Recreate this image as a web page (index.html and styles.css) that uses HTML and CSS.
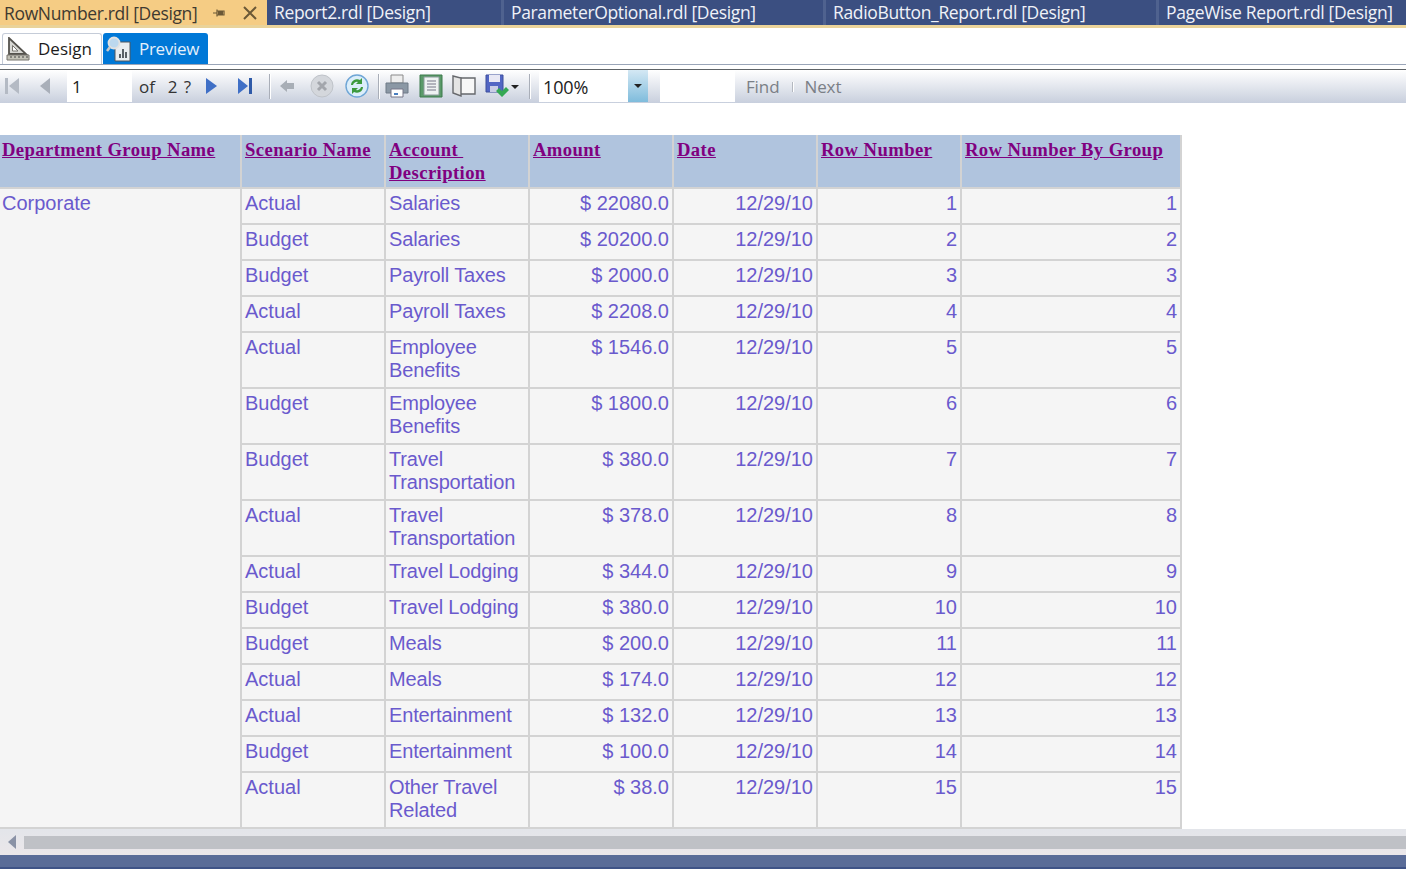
FILE: index.html
```html
<!DOCTYPE html>
<html lang="en">
<head>
    <meta charset="UTF-8">
    <title>RowNumber.rdl [Design]</title>
    <link rel="stylesheet" href="styles.css">
</head>
<body>
    <div class="doc-tabs">
        <div class="doc-tab active">
            <span class="doc-name">RowNumber.rdl [Design]</span>
            <svg class="pin" width="14" height="10" viewBox="0 0 14 10"><path d="M0 5H4M4 1.5V8.5M4 3H11V7H4" fill="none" stroke="#6b5836" stroke-width="1.2"/><path d="M5 3H10V7H5Z" fill="#6b5836"/></svg>
            <svg class="close" width="16" height="16" viewBox="0 0 16 16"><path d="M2 2L14 14M14 2L2 14" stroke="#6b5836" stroke-width="2"/></svg>
        </div>
        <div class="doc-tab t2">Report2.rdl [Design]</div>
        <div class="doc-tab t3">ParameterOptional.rdl [Design]</div>
        <div class="doc-tab t4">RadioButton_Report.rdl [Design]</div>
        <div class="doc-tab t5">PageWise Report.rdl [Design]</div>
    </div>
    <div class="doc-strip"></div>

    <div class="view-tabs">
        <div class="view-tab design">
            <svg width="24" height="24" viewBox="0 0 24 24"><path d="M3 1V17H20Z" fill="#d8d8d4" stroke="#55534e" stroke-width="1.8"/><path d="M6.5 8.5V14H12Z" fill="#fff" stroke="#77756f"/><path d="M1 18H23V23H1Z" fill="#c4c3b8" stroke="#77756f"/><path d="M5 19V21M9 19V21M13 19V21M17 19V21M21 19V21" stroke="#444"/></svg>
            <span class="view-label">Design</span>
        </div>
        <div class="view-tab preview">
            <svg width="25" height="26" viewBox="0 0 25 26"><path d="M9 6H24V25H9Z" fill="#e9edf0" stroke="#50565c"/><path d="M13 22V18H15V22ZM16 22V13H18V22ZM19 22V16H21V22Z" fill="#5a6066"/><circle cx="8" cy="7" r="5.5" fill="#bcd8ee" stroke="#e2e2e2" stroke-width="1.8"/><path d="M4 11L1 15" stroke="#c9c9c9" stroke-width="2.6"/></svg>
            <span class="view-label">Preview</span>
        </div>
    </div>

    <div class="toolbar">
        <svg class="tool first" width="16" height="18" viewBox="0 0 16 18"><path d="M1 1H4V17H1ZM15 1V17L5 9Z" fill="#b4bac4"/></svg>
        <svg class="tool prev" width="14" height="18" viewBox="0 0 14 18"><path d="M12 1V17L2 9Z" fill="#a9afb9"/></svg>
        <div class="field page-field">1</div>
        <span class="tool-text of">of</span>
        <span class="tool-text total">2 ?</span>
        <svg class="tool next" width="13" height="18" viewBox="0 0 13 18"><path d="M1 1V17L12 9Z" fill="#3f6fc6"/></svg>
        <svg class="tool last" width="16" height="18" viewBox="0 0 16 18"><path d="M1 1V17L11 9Z" fill="#3f6fc6"/><path d="M12 1H15V17H12Z" fill="#2f5aa8"/></svg>
        <div class="sep s1"></div>
        <svg class="tool back" width="16" height="14" viewBox="0 0 16 14"><path d="M1 7L8 1V4H15V10H8V13Z" fill="#a8aeb6"/></svg>
        <svg class="tool stop" width="24" height="24" viewBox="0 0 24 24"><circle cx="12" cy="12" r="11" fill="#d4d7dc" stroke="#bfc3c9"/><path d="M8 8L16 16M16 8L8 16" stroke="#a3a6ac" stroke-width="3"/></svg>
        <svg class="tool refresh" width="24" height="24" viewBox="0 0 24 24"><circle cx="12" cy="12" r="11" fill="#dceefa" stroke="#6fa6d6" stroke-width="1.4"/><path d="M6 11A6 6 0 0 1 15 6L17 4V10H11L13 8A4 4 0 0 0 8 11Z" fill="#3d9a3d"/><path d="M18 13A6 6 0 0 1 9 18L7 20V14H13L11 16A4 4 0 0 0 16 13Z" fill="#3d9a3d"/></svg>
        <div class="sep s2"></div>
        <svg class="tool print" width="24" height="24" viewBox="0 0 24 24"><path d="M6 1H18V9H6Z" fill="#eee" stroke="#8a8a8a"/><path d="M1 9H23V19H1Z" fill="#8b98a5" stroke="#6f7b87"/><path d="M6 15H18V23H6Z" fill="#fff" stroke="#778"/><path d="M9 19H13V21H9Z" fill="#4a7fc0"/></svg>
        <svg class="tool pages" width="24" height="24" viewBox="0 0 24 24"><path d="M1 1H23V23H1Z" fill="#5a9a69" stroke="#3c7a4c"/><path d="M5 3H20V21H5Z" fill="#eef2f2" stroke="#8a9a9a"/><path d="M8 7H17M8 10H17M8 13H17M8 16H17" stroke="#778"/></svg>
        <svg class="tool layout" width="24" height="22" viewBox="0 0 24 22"><path d="M8 3H23V19H8Z" fill="#f7f7f7" stroke="#66686c" stroke-width="1.4"/><path d="M1 1L9 3V21L1 18Z" fill="#e4e4e4" stroke="#66686c" stroke-width="1.4"/></svg>
        <svg class="tool save" width="24" height="24" viewBox="0 0 24 24"><path d="M1 1H18V18H1Z" fill="#5266c4" stroke="#3c4f9c"/><path d="M4 1H15V8H4Z" fill="#e8e8f4"/><path d="M5 12H13V18H5Z" fill="#c9cde6"/><path d="M11 17L14 14L17 17L21 13L24 16L17 23Z" fill="#34a853"/></svg>
        <div class="caret save-caret"></div>
        <div class="sep s3"></div>
        <div class="field zoom-field">100%</div>
        <div class="zoom-drop"><div class="caret"></div></div>
        <div class="field find-field"></div>
        <span class="tool-text find">Find</span>
        <div class="sep s4"></div>
        <span class="tool-text next-link">Next</span>
    </div>

    <div class="report">
        <table class="report-table">
            <colgroup>
                <col class="c1"><col class="c2"><col class="c3"><col class="c4"><col class="c5"><col class="c6"><col class="c7">
            </colgroup>
            <thead>
                <tr>
                    <th class="dept"><a>Department Group Name</a></th>
                    <th><a>Scenario Name</a></th>
                    <th><a>Account&nbsp;<br>Description</a></th>
                    <th><a>Amount</a></th>
                    <th><a>Date</a></th>
                    <th><a>Row Number</a></th>
                    <th><a>Row Number By Group</a></th>
                </tr>
            </thead>
            <tbody>
                <tr class="first-row"><td class="dept" rowspan="15">Corporate</td><td>Actual</td><td>Salaries</td><td class="num">$ 22080.0</td><td class="num">12/29/10</td><td class="num">1</td><td class="num">1</td></tr>
                <tr><td>Budget</td><td>Salaries</td><td class="num">$ 20200.0</td><td class="num">12/29/10</td><td class="num">2</td><td class="num">2</td></tr>
                <tr><td>Budget</td><td>Payroll Taxes</td><td class="num">$ 2000.0</td><td class="num">12/29/10</td><td class="num">3</td><td class="num">3</td></tr>
                <tr><td>Actual</td><td>Payroll Taxes</td><td class="num">$ 2208.0</td><td class="num">12/29/10</td><td class="num">4</td><td class="num">4</td></tr>
                <tr class="tall"><td>Actual</td><td>Employee Benefits</td><td class="num">$ 1546.0</td><td class="num">12/29/10</td><td class="num">5</td><td class="num">5</td></tr>
                <tr class="tall"><td>Budget</td><td>Employee Benefits</td><td class="num">$ 1800.0</td><td class="num">12/29/10</td><td class="num">6</td><td class="num">6</td></tr>
                <tr class="tall"><td>Budget</td><td>Travel Transportation</td><td class="num">$ 380.0</td><td class="num">12/29/10</td><td class="num">7</td><td class="num">7</td></tr>
                <tr class="tall"><td>Actual</td><td>Travel Transportation</td><td class="num">$ 378.0</td><td class="num">12/29/10</td><td class="num">8</td><td class="num">8</td></tr>
                <tr><td>Actual</td><td>Travel Lodging</td><td class="num">$ 344.0</td><td class="num">12/29/10</td><td class="num">9</td><td class="num">9</td></tr>
                <tr><td>Budget</td><td>Travel Lodging</td><td class="num">$ 380.0</td><td class="num">12/29/10</td><td class="num">10</td><td class="num">10</td></tr>
                <tr><td>Budget</td><td>Meals</td><td class="num">$ 200.0</td><td class="num">12/29/10</td><td class="num">11</td><td class="num">11</td></tr>
                <tr><td>Actual</td><td>Meals</td><td class="num">$ 174.0</td><td class="num">12/29/10</td><td class="num">12</td><td class="num">12</td></tr>
                <tr><td>Actual</td><td>Entertainment</td><td class="num">$ 132.0</td><td class="num">12/29/10</td><td class="num">13</td><td class="num">13</td></tr>
                <tr><td>Budget</td><td>Entertainment</td><td class="num">$ 100.0</td><td class="num">12/29/10</td><td class="num">14</td><td class="num">14</td></tr>
                <tr class="tall"><td>Actual</td><td>Other Travel Related</td><td class="num">$ 38.0</td><td class="num">12/29/10</td><td class="num">15</td><td class="num">15</td></tr>
            </tbody>
        </table>
    </div>

    <div class="scrollbar">
        <svg class="scroll-arrow" width="8" height="14" viewBox="0 0 8 14"><path d="M8 0V14L0 7Z" fill="#8a92a6"/></svg>
        <div class="scroll-thumb"></div>
    </div>
    <div class="status-bar"></div>
</body>
</html>
```

FILE: styles.css
```css
html, body {
    margin: 0;
    padding: 0;
    height: 100%;
    overflow: hidden;
}
body {
    display: flex;
    flex-direction: column;
    height: 869px;
    background-color: #fff;
    font-family: 'Open Sans', 'Noto Sans', sans-serif;
}
.doc-tabs {
    display: flex;
    height: 25px;
    flex-shrink: 0;
    background-color: #3b4f81;
    color: #f0f2f8;
    font-size: 17.5px;
    line-height: 24px;
    letter-spacing: -0.35px;
}
.doc-tab {
    flex-shrink: 0;
    white-space: nowrap;
    box-sizing: border-box;
    height: 25px;
    padding-left: 7px;
    border-right: 3px solid #4f628f;
}
.doc-tab.active {
    display: flex;
    align-items: center;
    width: 267px;
    height: 28px;
    padding-left: 4px;
    padding-bottom: 3px;
    border-right: none;
    background-color: #f5cc84;
    color: #3f3a30;
    line-height: 24px;
}
.doc-name {
    width: 209px;
    height: 24px;
    flex-shrink: 0;
}
.close {
    margin-left: 15px;
}
.t2 { width: 237px; }
.t3 { width: 322px; }
.t4 { width: 333px; }
.t5 { width: 247px; border-right: none; }
.doc-strip {
    height: 3px;
    flex-shrink: 0;
    background-color: #ead39a;
}
.view-tabs {
    display: flex;
    height: 37px;
    flex-shrink: 0;
    padding: 5px 0 0 2px;
    box-sizing: border-box;
    border-bottom: 1px solid #9aa5b8;
    font-size: 17px;
}
.view-tab {
    display: flex;
    align-items: center;
    box-sizing: border-box;
    height: 31px;
    border-radius: 3px 3px 0 0;
}
.view-label {
    margin-top: -1px;
}
.view-tab.design {
    width: 100px;
    padding-left: 3px;
    gap: 8px;
    border: 1px solid #c5ccd8;
    border-bottom: none;
    color: #1c1c1c;
    background-color: #fff;
}
.view-tab.preview {
    width: 105px;
    margin-left: 1px;
    padding-left: 3px;
    gap: 8px;
    letter-spacing: -0.3px;
    color: #e4f0fb;
    background-color: #0078d7;
}
.toolbar {
    display: flex;
    align-items: center;
    height: 34px;
    flex-shrink: 0;
    margin-top: 4px;
    box-sizing: border-box;
    border-top: 1px solid #5f6468;
    background: linear-gradient(#ffffff, #c8cfdd);
    font-size: 17px;
    letter-spacing: -0.1px;
}
.tool {
    flex-shrink: 0;
    margin-top: -1px;
}
.first { margin-left: 4px; }
.prev { margin-left: 18px; }
.field {
    flex-shrink: 0;
    align-self: stretch;
    box-sizing: border-box;
    margin-bottom: 1px;
    background-color: #fff;
    color: #222;
    line-height: 34px;
}
.page-field {
    width: 65px;
    margin-left: 15px;
    padding-left: 5px;
}
.tool-text {
    flex-shrink: 0;
    color: #333;
}
.of { margin-left: 7px; }
.total { margin-left: 13px; word-spacing: 2px; }
.next { margin-left: 14px; }
.last { margin-left: 19px; }
.sep {
    flex-shrink: 0;
    width: 1px;
    height: 25px;
    background-color: #a9aeb8;
    box-shadow: 1px 0 0 #fff;
}
.s1 { margin-left: 16px; }
.back { margin-left: 9px; }
.stop { margin-left: 15px; }
.refresh { margin-left: 11px; }
.s2 { margin-left: 9px; }
.print { margin-left: 6px; }
.pages { margin-left: 10px; }
.layout { margin-left: 9px; }
.save { margin-left: 9px; }
.caret {
    width: 0;
    height: 0;
    border-left: 4px solid transparent;
    border-right: 4px solid transparent;
    border-top: 4px solid #222;
}
.save-caret { margin-left: 2px; flex-shrink: 0; }
.s3 { margin-left: 10px; }
.zoom-field {
    width: 89px;
    margin-left: 9px;
    padding-left: 4px;
    font-size: 18px;
}
.zoom-drop {
    flex-shrink: 0;
    align-self: stretch;
    display: flex;
    align-items: center;
    justify-content: center;
    width: 20px;
    margin-bottom: 1px;
    background: linear-gradient(#d4e8f4, #7fbcdc);
}
.find-field {
    width: 75px;
    margin-left: 12px;
}
.find {
    margin-left: 11px;
    color: #7b7f86;
}
.s4 {
    height: 10px;
    margin-left: 13px;
    background-color: #b4b8c0;
}
.next-link {
    margin-left: 11px;
    color: #7b7f86;
}
.report {
    flex: 1;
    min-height: 0;
    padding-top: 32px;
    overflow: hidden;
}
.report-table {
    table-layout: fixed;
    border-collapse: collapse;
    width: 1181px;
    font-family: 'Liberation Sans', Arial, sans-serif;
    font-size: 20px;
    line-height: 23px;
    color: #6a5acd;
    background-color: #f5f5f5;
}
.c1 { width: 241px; }
.c2, .c3, .c4, .c5, .c6 { width: 144px; }
.c7 { width: 220px; }
.report-table th {
    height: 53px;
    padding: 3px 2px 0 3px;
    border: 2px solid #d3d3d3;
    border-top: none;
    box-sizing: border-box;
    vertical-align: top;
    text-align: left;
    background-color: #b0c4de;
    font-family: 'Liberation Serif', 'Times New Roman', serif;
    font-size: 18.67px;
    line-height: 23px;
    font-weight: bold;
    letter-spacing: 0.4px;
    color: #800080;
}
.report-table th a {
    text-decoration: underline;
}
.report-table td {
    height: 36px;
    padding: 3px 3px 0 3px;
    border: 2px solid #d3d3d3;
    box-sizing: border-box;
    vertical-align: top;
    overflow: hidden;
}
.report-table th.dept,
.report-table td.dept {
    border-left: none;
    padding-left: 2px;
}
.report-table td:nth-last-child(5) {
    letter-spacing: -0.15px;
}
.report-table tr.tall td {
    height: 56px;
}
.report-table td.num {
    text-align: right;
}
.scrollbar {
    display: flex;
    align-items: center;
    height: 26px;
    flex-shrink: 0;
    padding-left: 8px;
    box-sizing: border-box;
    background: linear-gradient(#e3e5ea, #ebe7ea);
}
.scroll-thumb {
    flex: 1;
    height: 13px;
    margin-left: 8px;
    background-color: #bfc1c6;
}
.status-bar {
    height: 14px;
    flex-shrink: 0;
    box-sizing: border-box;
    background-color: #5a6c98;
    border-bottom: 2px solid #3f5387;
}
```
